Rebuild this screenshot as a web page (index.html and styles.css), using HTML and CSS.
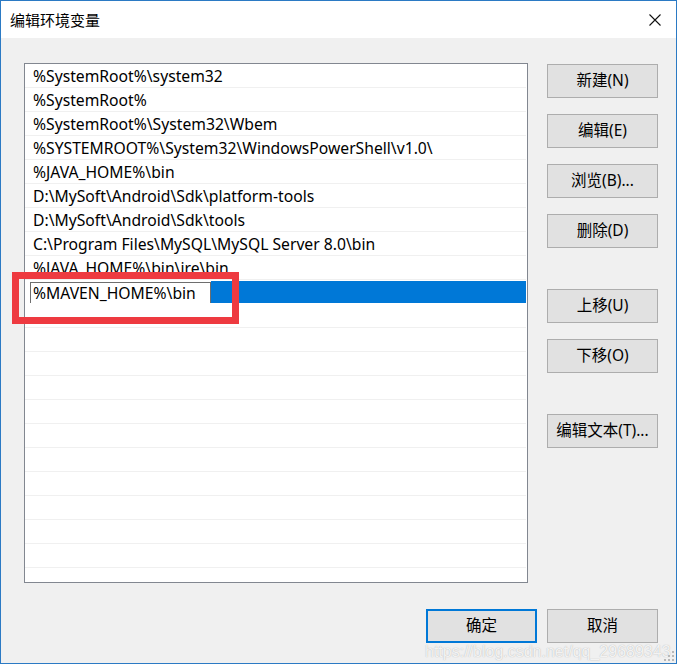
FILE: index.html
```html
<!DOCTYPE html>
<html lang="zh-CN">
<head>
<meta charset="utf-8">
<title>编辑环境变量</title>
<link rel="stylesheet" href="styles.css">
</head>
<body>
<div class="window">
  <div class="titlebar">
    <span class="title">编辑环境变量</span>
    <svg class="close" width="14" height="14" viewBox="0 0 14 14"><path d="M1.5 1.5 L12.5 12.5 M12.5 1.5 L1.5 12.5" stroke="#111" stroke-width="1.1" fill="none"/></svg>
  </div>
  <div class="content">
    <div class="main">
      <div class="list">
        <div class="row">%SystemRoot%\system32</div>
        <div class="row">%SystemRoot%</div>
        <div class="row">%SystemRoot%\System32\Wbem</div>
        <div class="row">%SYSTEMROOT%\System32\WindowsPowerShell\v1.0\</div>
        <div class="row">%JAVA_HOME%\bin</div>
        <div class="row">D:\MySoft\Android\Sdk\platform-tools</div>
        <div class="row">D:\MySoft\Android\Sdk\tools</div>
        <div class="row">C:\Program Files\MySQL\MySQL Server 8.0\bin</div>
        <div class="row">%JAVA_HOME%\bin\jre\bin</div>
        <div class="row row-selected"><span class="edit">%MAVEN_HOME%\bin</span></div>
        <div class="row"></div>
        <div class="row"></div>
        <div class="row"></div>
        <div class="row"></div>
        <div class="row"></div>
        <div class="row"></div>
        <div class="row"></div>
        <div class="row"></div>
        <div class="row"></div>
        <div class="row"></div>
        <div class="row"></div>
        <div class="row"></div>
      </div>
      <div class="buttons">
        <button class="btn">新建(N)</button>
        <button class="btn">编辑(E)</button>
        <button class="btn">浏览(B)...</button>
        <button class="btn">删除(D)</button>
        <button class="btn btn-gap">上移(U)</button>
        <button class="btn">下移(O)</button>
        <button class="btn btn-gap">编辑文本(T)...</button>
      </div>
    </div>
    <div class="footer">
      <button class="btn btn-default">确定</button>
      <button class="btn">取消</button>
    </div>
  </div>
  <div class="highlight"></div>
  <div class="watermark">https://blog.csdn.net/qq_29689343</div>
  <svg class="grip" width="10" height="10" viewBox="0 0 10 10">
    <rect x="8" y="0" width="2" height="2" fill="#b8b8b8"/>
    <rect x="4" y="4" width="2" height="2" fill="#b8b8b8"/>
    <rect x="8" y="4" width="2" height="2" fill="#b8b8b8"/>
    <rect x="0" y="8" width="2" height="2" fill="#b8b8b8"/>
    <rect x="4" y="8" width="2" height="2" fill="#b8b8b8"/>
    <rect x="8" y="8" width="2" height="2" fill="#b8b8b8"/>
  </svg>
</div>
</body>
</html>
```

FILE: styles.css
```css
* { box-sizing: border-box; }

html, body {
  margin: 0;
  padding: 0;
  background: #f0f0f0;
}

body {
  font-family: "Noto Sans", "Noto Sans CJK SC", sans-serif;
  font-size: 15.7px;
  color: #000;
}

.window {
  position: relative;
  width: 677px;
  height: 664px;
  border: 1px solid #2b7ac4;
  background: #f0f0f0;
  display: flex;
  flex-direction: column;
  overflow: hidden;
}

.titlebar {
  height: 37px;
  background: #fff;
  display: flex;
  align-items: center;
  justify-content: space-between;
  padding: 0 14px 0 9px;
  flex: none;
}

.title {
  font-family: "Noto Sans CJK SC", sans-serif;
  font-size: 15px;
  color: #000;
}

.close {
  display: block;
}

.content {
  flex: 1;
  padding: 25px 18px 0 23px;
  display: flex;
  flex-direction: column;
}

.main {
  display: grid;
  grid-template-columns: 504px 111px;
  column-gap: 19px;
  align-items: start;
}

.list {
  height: 520px;
  background: #fff;
  border: 1px solid #828790;
  overflow: hidden;
  padding-right: 1px;
}

.row {
  height: 24px;
  line-height: 25px;
  padding-left: 8px;
  border-bottom: 1px solid #f0f0f0;
  white-space: nowrap;
  overflow: hidden;
}

.row-selected {
  padding-left: 5px;
  padding-top: 2px;
  border-bottom-color: #fff;
  background:
    linear-gradient(to right, #fff 0 186px, transparent 186px),
    linear-gradient(#fff 0 1px, #0078d7 1px 23px, #fff 23px);
}

.edit {
  display: block;
  width: 181px;
  height: 22px;
  line-height: 21px;
  background: #fff;
  border: 1px solid #6e6e6e;
  padding-left: 2px;
  white-space: nowrap;
}

.buttons {
  display: flex;
  flex-direction: column;
  gap: 16px;
  padding-top: 1px;
}

.btn {
  font-family: "Noto Sans", "Noto Sans CJK SC", sans-serif;
  font-size: 15.5px;
  color: #000;
  width: 111px;
  height: 34px;
  background: #e1e1e1;
  border: 1px solid #adadad;
  border-radius: 0;
  padding: 0 0 3px 0;
  margin: 0;
}

.btn-gap {
  margin-top: 25px;
}

.footer {
  display: flex;
  justify-content: flex-end;
  gap: 10px;
  margin-top: 26px;
}

.btn-default {
  border: 2px solid #0078d7;
}

.highlight {
  position: absolute;
  left: 11px;
  top: 271px;
  width: 227px;
  height: 52px;
  border: 7px solid #ee3a40;
}

.watermark {
  position: absolute;
  left: 424px;
  top: 642px;
  font-family: "Liberation Sans", sans-serif;
  font-size: 16px;
  line-height: 18px;
  color: rgba(255, 255, 255, 0.85);
  text-shadow: 0 0 1px rgba(120, 120, 120, 0.6);
  white-space: nowrap;
}

.grip {
  position: absolute;
  right: 2px;
  bottom: 2px;
}
```
